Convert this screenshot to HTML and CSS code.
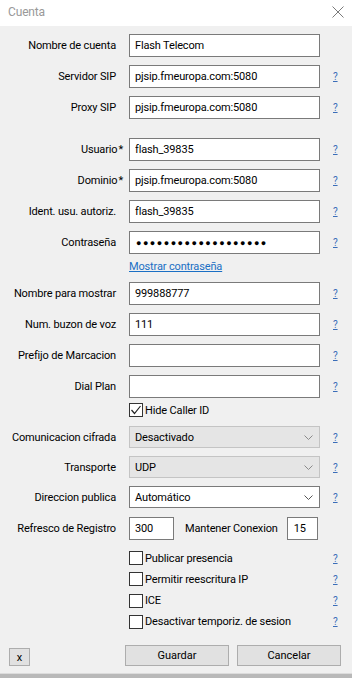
FILE: index.html
```html
<!DOCTYPE html>
<html lang="es">
<head>
    <meta charset="UTF-8">
    <meta name="viewport" content="width=device-width, initial-scale=1.0">
    <title>Cuenta</title>
    <link rel="stylesheet" href="styles.css">
</head>
<body>
    <div class="window">
        <!-- Title bar -->
        <div class="titlebar">
            <span class="title">Cuenta</span>
            <svg class="close" width="12" height="12" viewBox="0 0 12 12">
                <path d="M0.5 0.5 L11.5 11.5 M11.5 0.5 L0.5 11.5" stroke="#7a7a7a" stroke-width="1" fill="none"/>
            </svg>
        </div>

        <!-- Account form -->
        <div class="account">
            <div class="row">
                <label class="lbl">Nombre de cuenta</label>
                <input class="field" type="text" value="Flash Telecom">
                <span></span>
            </div>
            <div class="row">
                <label class="lbl">Servidor SIP</label>
                <input class="field" type="text" value="pjsip.fmeuropa.com:5080">
                <a class="help" href="#">?</a>
            </div>
            <div class="row">
                <label class="lbl">Proxy SIP</label>
                <input class="field" type="text" value="pjsip.fmeuropa.com:5080">
                <a class="help" href="#">?</a>
            </div>

            <div class="row section">
                <label class="lbl">Usuario<span class="req">*</span></label>
                <input class="field" type="text" value="flash_39835">
                <a class="help" href="#">?</a>
            </div>
            <div class="row">
                <label class="lbl">Dominio<span class="req">*</span></label>
                <input class="field" type="text" value="pjsip.fmeuropa.com:5080">
                <a class="help" href="#">?</a>
            </div>
            <div class="row">
                <label class="lbl">Ident. usu. autoriz.</label>
                <input class="field" type="text" value="flash_39835">
                <a class="help" href="#">?</a>
            </div>
            <div class="row">
                <label class="lbl">Contraseña</label>
                <div class="field password">&#9679;&#9679;&#9679;&#9679;&#9679;&#9679;&#9679;&#9679;&#9679;&#9679;&#9679;&#9679;&#9679;&#9679;&#9679;&#9679;&#9679;&#9679;&#9679;</div>
                <a class="help" href="#">?</a>
            </div>
            <div class="row small link-row">
                <span></span>
                <a class="show-pass" href="#">Mostrar contraseña</a>
                <span></span>
            </div>

            <div class="row">
                <label class="lbl">Nombre para mostrar</label>
                <input class="field" type="text" value="999888777">
                <a class="help" href="#">?</a>
            </div>
            <div class="row">
                <label class="lbl">Num. buzon de voz</label>
                <input class="field" type="text" value="111">
                <a class="help" href="#">?</a>
            </div>
            <div class="row">
                <label class="lbl">Prefijo de Marcacion</label>
                <input class="field" type="text" value="">
                <a class="help" href="#">?</a>
            </div>
            <div class="row">
                <label class="lbl">Dial Plan</label>
                <input class="field" type="text" value="">
                <a class="help" href="#">?</a>
            </div>
            <div class="row small hide-row">
                <span></span>
                <label class="check">
                    <span class="box">
                        <svg width="12" height="12" viewBox="0 0 12 12">
                            <path d="M1.5 6 L4.5 9.5 L10.5 2" stroke="#222" stroke-width="1.2" fill="none"/>
                        </svg>
                    </span>
                    Hide Caller ID
                </label>
                <span></span>
            </div>

            <div class="row sel-row">
                <label class="lbl">Comunicacion cifrada</label>
                <div class="field select disabled">
                    <span>Desactivado</span>
                    <svg class="chev" width="9" height="5" viewBox="0 0 9 5"><path d="M0.5 0.5 L4.5 4.5 L8.5 0.5" stroke="#8a8a8a" fill="none"/></svg>
                </div>
                <a class="help" href="#">?</a>
            </div>
            <div class="row sel-row">
                <label class="lbl">Transporte</label>
                <div class="field select disabled">
                    <span>UDP</span>
                    <svg class="chev" width="9" height="5" viewBox="0 0 9 5"><path d="M0.5 0.5 L4.5 4.5 L8.5 0.5" stroke="#8a8a8a" fill="none"/></svg>
                </div>
                <a class="help" href="#">?</a>
            </div>
            <div class="row sel-row pub-row">
                <label class="lbl">Direccion publica</label>
                <div class="field select">
                    <span>Automático</span>
                    <svg class="chev" width="9" height="5" viewBox="0 0 9 5"><path d="M0.5 0.5 L4.5 4.5 L8.5 0.5" stroke="#555" fill="none"/></svg>
                </div>
                <a class="help" href="#">?</a>
            </div>
            <div class="row refresh-row">
                <label class="lbl">Refresco de Registro</label>
                <div class="pair">
                    <input class="field short" type="text" value="300">
                    <span class="pair-lbl">Mantener Conexion</span>
                    <input class="field tiny" type="text" value="15">
                </div>
                <span></span>
            </div>

            <div class="options">
                <div class="row small">
                    <span></span>
                    <label class="check"><span class="box"></span>Publicar presencia</label>
                    <a class="help" href="#">?</a>
                </div>
                <div class="row small">
                    <span></span>
                    <label class="check"><span class="box"></span>Permitir reescritura IP</label>
                    <a class="help" href="#">?</a>
                </div>
                <div class="row small">
                    <span></span>
                    <label class="check"><span class="box"></span>ICE</label>
                    <a class="help" href="#">?</a>
                </div>
                <div class="row small">
                    <span></span>
                    <label class="check wide"><span class="box"></span>Desactivar temporiz. de sesion</label>
                    <a class="help" href="#">?</a>
                </div>
            </div>
        </div>

        <!-- Buttons -->
        <div class="footer">
            <button class="btn btn-x">x</button>
            <span class="spacer"></span>
            <button class="btn btn-main">Guardar</button>
            <button class="btn btn-main">Cancelar</button>
        </div>
        <div class="frame-bottom"></div>
    </div>
</body>
</html>
```

FILE: styles.css
```css
/* Reset and base styles */
* {
    margin: 0;
    padding: 0;
    box-sizing: border-box;
}

body {
    font-family: Roboto, "Open Sans", Arial, sans-serif;
    font-size: 11px;
    letter-spacing: -0.15px;
    color: #000;
    background-color: #f0f0f0;
}

/* Window */
.window {
    width: 352px;
    height: 678px;
    display: flex;
    flex-direction: column;
    background-color: #f0f0f0;
}

.titlebar {
    height: 26px;
    background-color: #fff;
    display: flex;
    align-items: center;
    justify-content: space-between;
    padding: 0 8px 2px 8px;
}

.title {
    color: #999;
    font-size: 12px;
}

/* Form rows */
.account {
    display: flex;
    flex-direction: column;
    padding-top: 8px;
}

.row {
    display: grid;
    grid-template-columns: 116px 191px 1fr;
    column-gap: 13px;
    align-items: center;
    height: 23px;
    margin-bottom: 8px;
}

.row.section {
    margin-top: 11px;
}

.lbl {
    text-align: right;
    white-space: nowrap;
}

.req {
    margin-right: -7px;
    margin-left: 1px;
}

.field {
    width: 191px;
    height: 23px;
    border: 1px solid #7a7a7a;
    background-color: #fff;
    padding: 0 5px;
    font-family: inherit;
    font-size: 11px;
    letter-spacing: -0.15px;
    color: #000;
    outline: none;
}

.password {
    display: flex;
    align-items: center;
    font-size: 9px;
    letter-spacing: 1.5px;
    padding-left: 6px;
}

.help {
    color: #3a6db8;
    font-size: 10px;
    text-decoration: underline;
    padding-left: 0;
}

.row.small {
    height: 16px;
}

.link-row {
    margin-top: -4px;
}

.show-pass {
    color: #1a6fc4;
    text-decoration: underline;
}

.hide-row {
    margin-top: -4px;
}

/* Checkboxes */
.check {
    display: flex;
    align-items: center;
    gap: 2px;
    white-space: nowrap;
}

.box {
    width: 14px;
    height: 14px;
    border: 1px solid #333;
    background-color: #fff;
    display: flex;
    align-items: center;
    justify-content: center;
}

/* Selects */
.select {
    height: 22px;
    display: flex;
    align-items: center;
    justify-content: space-between;
    padding-right: 6px;
}

.select.disabled {
    background-color: #e5e5e5;
    border-color: #c4c4c4;
}

.sel-row {
    height: 22px;
}

.pub-row {
    margin-bottom: 9px;
}

.pub-row .select {
    border-color: #7a7a7a;
}

/* Refresh / keep alive */
.pair {
    display: flex;
    align-items: center;
}

.field.short {
    width: 45px;
}

.pair-lbl {
    margin-left: 11px;
    margin-right: 9px;
    white-space: nowrap;
}

.field.tiny {
    width: 31px;
    padding: 0 6px;
}

.options {
    display: flex;
    flex-direction: column;
    gap: 5.3px;
    margin-top: 2px;
}

.options .row {
    margin-bottom: 0;
}

/* Footer buttons */
.footer {
    display: flex;
    align-items: flex-end;
    padding: 0 11px 0 9px;
    margin-top: auto;
    margin-bottom: 7px;
}

.spacer {
    flex: 1;
}

.btn {
    font-family: inherit;
    font-size: 11px;
    color: #000;
    background-color: #e1e1e1;
    border: 1px solid #adadad;
    cursor: pointer;
}

.btn-x {
    width: 21px;
    height: 18px;
}

.btn-main {
    width: 104px;
    height: 21px;
    margin-left: 8px;
}

.frame-bottom {
    height: 5px;
    border-top: 1px solid #dcdcdc;
    background-color: #b9b9b9;
}
```
